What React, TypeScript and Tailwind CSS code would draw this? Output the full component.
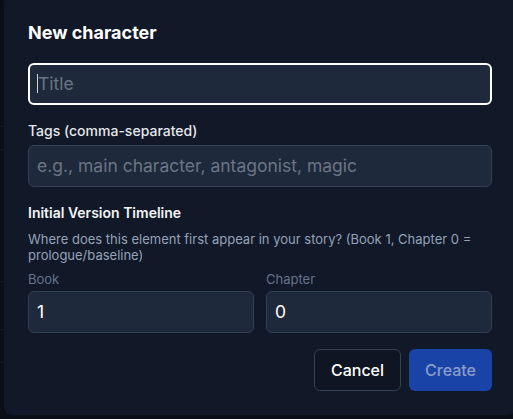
import { useState } from "react";

export default function App() {
  const [title, setTitle] = useState("");
  const [tags, setTags] = useState("");
  const [book, setBook] = useState("1");
  const [chapter, setChapter] = useState("0");

  return (
    <div className="w-[513px] h-[419px] overflow-hidden bg-[#0a0e17] flex font-['Inter','Liberation_Sans',sans-serif]">
      {/* page behind the backdrop */}
      <div className="w-[4px] shrink-0 flex flex-col">
        <div className="h-[127px] border-b border-[#121722]" />
        <div className="h-[23px] border-b border-[#121722]" />
        <div className="h-[132px] border-b border-[#121722]" />
        <div className="h-[48px] border-b border-[#121722]" />
        <div className="h-[33px] border-b border-[#121722]" />
      </div>

      {/* Modal */}
      <div className="w-[512px] shrink-0 self-start -mt-[5px] bg-[#111827] rounded-lg p-6">
        <h2 className="text-lg font-bold text-white mb-4">New character</h2>

        <div className="space-y-4">
          <div className="relative">
            <input
              value={title}
              onChange={(e) => setTitle(e.target.value)}
              placeholder="Title"
              className="w-full bg-[#1e293b] border-2 border-white rounded-md px-2 py-[7px] text-[17.5px] leading-6 text-white placeholder:text-[#6b7585] focus:outline-none"
            />
            <span className="absolute left-[9px] top-[11px] h-[19px] w-px bg-gray-300" />
          </div>

          <div>
            <label className="block text-sm font-medium text-gray-200 mb-1">
              Tags (comma-separated)
            </label>
            <input
              value={tags}
              onChange={(e) => setTags(e.target.value)}
              placeholder="e.g., main character, antagonist, magic"
              className="w-full bg-[#1e293b] border border-[#334155] rounded-md px-2 py-2 text-[17.5px] leading-6 text-white placeholder:text-[#6b7585] focus:outline-none"
            />
          </div>

          <div>
            <h3 className="text-sm font-semibold text-gray-100">
              Initial Version Timeline
            </h3>
            <p className="text-[13px] leading-4 text-[#94a3b8] mt-2">
              Where does this element first appear in your story? (Book 1, Chapter 0 = prologue/baseline)
            </p>
            <div className="grid grid-cols-2 gap-3 mt-2">
              <div>
                <label className="block text-[13px] leading-4 text-[#64748b] mb-1">Book</label>
                <input
                  type="text"
                  value={book}
                  onChange={(e) => setBook(e.target.value)}
                  className="w-full bg-[#1e293b] border border-[#334155] rounded-md px-2 py-2 text-[17.5px] leading-6 text-white focus:outline-none"
                />
              </div>
              <div>
                <label className="block text-[13px] leading-4 text-[#64748b] mb-1">Chapter</label>
                <input
                  type="text"
                  value={chapter}
                  onChange={(e) => setChapter(e.target.value)}
                  className="w-full bg-[#1e293b] border border-[#334155] rounded-md px-2 py-2 text-[17.5px] leading-6 text-white focus:outline-none"
                />
              </div>
            </div>
          </div>

          <div className="flex justify-end gap-2">
            <button className="px-4 py-2 border border-[#334155] rounded-md text-base font-medium text-white bg-[#0f1523]">
              Cancel
            </button>
            <button
              disabled
              className="px-4 py-[9px] rounded-md text-base font-medium text-[#8a9cc9] bg-[#1a43a8] cursor-not-allowed"
            >
              Create
            </button>
          </div>
        </div>
      </div>
    </div>
  );
}
